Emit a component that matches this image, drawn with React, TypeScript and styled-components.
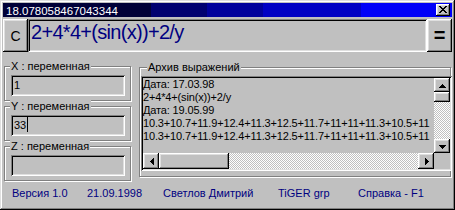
import React from 'react';
import styled, { createGlobalStyle } from 'styled-components';

const GlobalStyle = createGlobalStyle`
  html, body {
    margin: 0;
    padding: 0;
    background: #ffffff;
  }
  body {
    font-family: "Liberation Sans", Arial, sans-serif;
    font-size: 11px;
    color: #000;
  }
`;

// win95 bevels
const raised = `
  box-shadow: inset -1px -1px #000, inset 1px 1px #fff,
    inset -2px -2px #808080, inset 2px 2px #dfdfdf;
`;
const sunken = `
  box-shadow: inset 1px 1px #808080, inset -1px -1px #fff,
    inset 2px 2px #000, inset -2px -2px #dfdfdf;
`;

const Window = styled.div`
  width: 455px;
  height: 210px;
  box-sizing: border-box;
  padding: 3px;
  background: #c0c0c0;
  box-shadow: inset -1px -1px #000, inset 1px 1px #dfdfdf,
    inset -2px -2px #808080, inset 2px 2px #fff;
  display: flex;
  flex-direction: column;
`;

const TitleBar = styled.div`
  height: 14px;
  flex: none;
  display: flex;
  align-items: center;
  justify-content: space-between;
  padding: 0 2px 0 3px;
  color: #fff;
  font-size: 11.5px;
  line-height: 14px;
  background: linear-gradient(
    to right,
    #000038 0 148px,
    #000070 148px 204px,
    #00009c 204px 260px,
    #0000c4 260px 358px,
    #0000f8 358px
  );
`;

const TitleText = styled.span`
  padding-top: 1px;
`;

const CloseButton = styled.div`
  width: 14px;
  height: 12px;
  background: #c0c0c0;
  ${raised}
  display: flex;
  align-items: center;
  justify-content: center;
  padding-bottom: 1px;
  box-sizing: border-box;
`;

const Toolbar = styled.div`
  margin-top: 2px;
  height: 33px;
  flex: none;
  display: flex;
`;

const ToolButton = styled.div<{ $bold?: boolean; $size: number }>`
  width: 25px;
  flex: none;
  background: #c0c0c0;
  ${raised}
  display: flex;
  align-items: center;
  justify-content: center;
  font-size: ${(p) => p.$size}px;
  font-weight: ${(p) => (p.$bold ? 700 : 400)};
`;

const Expression = styled.div`
  flex: 1;
  ${sunken}
  box-sizing: border-box;
  padding: 2px 0 0 3px;
  color: #000080;
  font-size: 20px;
  line-height: 23px;
  letter-spacing: -0.7px;
  white-space: nowrap;
  overflow: hidden;
`;

const Main = styled.div`
  height: 130px;
  flex: none;
  display: flex;
  align-items: flex-start;
  padding-left: 1px;
`;

const LeftColumn = styled.div`
  width: 127px;
  flex: none;
  padding-top: 14px;
  display: flex;
  flex-direction: column;
  gap: 5px;
`;

const Group = styled.div<{ $width: number; $height: number }>`
  width: ${(p) => p.$width}px;
  height: ${(p) => p.$height}px;
  box-sizing: border-box;
  border: 1px solid #808080;
  box-shadow: 1px 1px 0 #fff, inset 1px 1px 0 #fff;
  flex: none;
`;

const VarGroup = styled(Group)`
  padding: 0 5px 0 6px;
`;

const ArchiveGroup = styled(Group)`
  margin: 15px 0 0 8px;
  padding-left: 1px;
`;

const Legend = styled.div<{ $indent: number }>`
  width: fit-content;
  margin: -7px 0 0 ${(p) => p.$indent}px;
  padding: 0 1px;
  background: #c0c0c0;
  line-height: 13px;
  white-space: nowrap;
`;

const Edit = styled.div`
  margin-top: 2px;
  height: 21px;
  box-sizing: border-box;
  ${sunken}
  padding: 4px 0 0 3px;
  line-height: 13px;
  display: flex;
  align-items: flex-start;
`;

const Caret = styled.span`
  width: 1px;
  height: 15px;
  margin: -2px 0 0 1px;
  background: #000;
`;

const Memo = styled.div`
  margin-top: 2px;
  width: 311px;
  height: 95px;
  box-sizing: border-box;
  padding: 2px;
  ${sunken}
  display: grid;
  grid-template-columns: 1fr 16px;
  grid-template-rows: 1fr 16px;
`;

const MemoText = styled.div`
  overflow: hidden;
  padding-left: 0;
  line-height: 13px;
  letter-spacing: -0.15px;
  white-space: nowrap;
`;

const VScroll = styled.div`
  display: flex;
  flex-direction: column;
`;

const HScroll = styled.div`
  display: flex;
`;

const Track = styled.div`
  flex: 1;
  background-color: #c0c0c0;
  background-image: conic-gradient(#fff 25%, #c0c0c0 0 50%, #fff 0 75%, #c0c0c0 0);
  background-size: 2px 2px;
`;

const ScrollPart = styled.div<{ $w?: number; $h?: number }>`
  flex: none;
  width: ${(p) => (p.$w ? `${p.$w}px` : 'auto')};
  height: ${(p) => (p.$h ? `${p.$h}px` : 'auto')};
  background: #c0c0c0;
  ${raised}
  display: flex;
  align-items: center;
  justify-content: center;
`;

const Corner = styled.div`
  background: #c0c0c0;
`;

const Footer = styled.div`
  flex: 1;
  display: grid;
  grid-template-columns: 75px 76px 115px 80px auto;
  padding: 5px 0 0 9px;
  color: #000080;
  line-height: 13px;
  white-space: nowrap;
`;

const Arrow = ({ dir }: { dir: 'up' | 'down' | 'left' | 'right' }) => {
  const rot = { up: 0, down: 180, left: 270, right: 90 }[dir];
  return (
    <svg
      width="7"
      height="7"
      viewBox="0 0 7 7"
      shapeRendering="crispEdges"
      style={{ transform: `rotate(${rot}deg)` }}
    >
      <path d="M3 1.5h1v1h-1z M2 2.5h3v1h-3z M1 3.5h5v1h-5z M0 4.5h7v1h-7z" fill="#000" />
    </svg>
  );
};

const CloseIcon = () => (
  <svg width="8" height="7" viewBox="0 0 8 7" shapeRendering="crispEdges">
    <path
      d="M0 0h2v1h-2z M6 0h2v1h-2z M1 1h2v1h-2z M5 1h2v1h-2z M2 2h4v1h-4z M3 3h2v1h-2z M2 4h4v1h-4z M1 5h2v1h-2z M5 5h2v1h-2z M0 6h2v1h-2z M6 6h2v1h-2z"
      fill="#000"
    />
  </svg>
);

const series = '10.3+10.7+11.9+12.4+11.3+12.5+11.7+11+11+11.3+10.5+11';

const archive = ['Дата: 17.03.98', '2+4*4+(sin(x))+2/y', 'Дата: 19.05.99', series, series];

const vars = [
  { name: 'X', value: '1', caret: false },
  { name: 'Y', value: '33', caret: true },
  { name: 'Z', value: '', caret: false },
];

const footer = ['Версия 1.0', '21.09.1998', 'Светлов Дмитрий', 'TiGER grp', 'Справка - F1'];

export default function App() {
  return (
    <>
      <GlobalStyle />
      <Window>
        <TitleBar>
          <TitleText>18.078058467043344</TitleText>
          <CloseButton>
            <CloseIcon />
          </CloseButton>
        </TitleBar>

        <Toolbar>
          <ToolButton $size={14}>C</ToolButton>
          <Expression>2+4*4+(sin(x))+2/y</Expression>
          <ToolButton $size={20} $bold>=</ToolButton>
        </Toolbar>

        <Main>
          <LeftColumn>
            {vars.map((v) => (
              <VarGroup key={v.name} $width={127} $height={35}>
                <Legend $indent={-1}>{v.name} : переменная</Legend>
                <Edit>
                  {v.value}
                  {v.caret && <Caret />}
                </Edit>
              </VarGroup>
            ))}
          </LeftColumn>

          <ArchiveGroup $width={312} $height={110}>
            <Legend $indent={6}>Архив выражений</Legend>
            <Memo>
              <MemoText>
                {archive.map((line, i) => (
                  <div key={i}>{line}</div>
                ))}
              </MemoText>
              <VScroll>
                <ScrollPart $h={14}>
                  <Arrow dir="up" />
                </ScrollPart>
                <ScrollPart $h={10} />
                <Track />
                <ScrollPart $h={14}>
                  <Arrow dir="down" />
                </ScrollPart>
              </VScroll>
              <HScroll>
                <ScrollPart $w={16}>
                  <Arrow dir="left" />
                </ScrollPart>
                <ScrollPart $w={70} />
                <Track />
                <ScrollPart $w={16}>
                  <Arrow dir="right" />
                </ScrollPart>
              </HScroll>
              <Corner />
            </Memo>
          </ArchiveGroup>
        </Main>

        <Footer>
          {footer.map((t) => (
            <span key={t}>{t}</span>
          ))}
        </Footer>
      </Window>
    </>
  );
}
